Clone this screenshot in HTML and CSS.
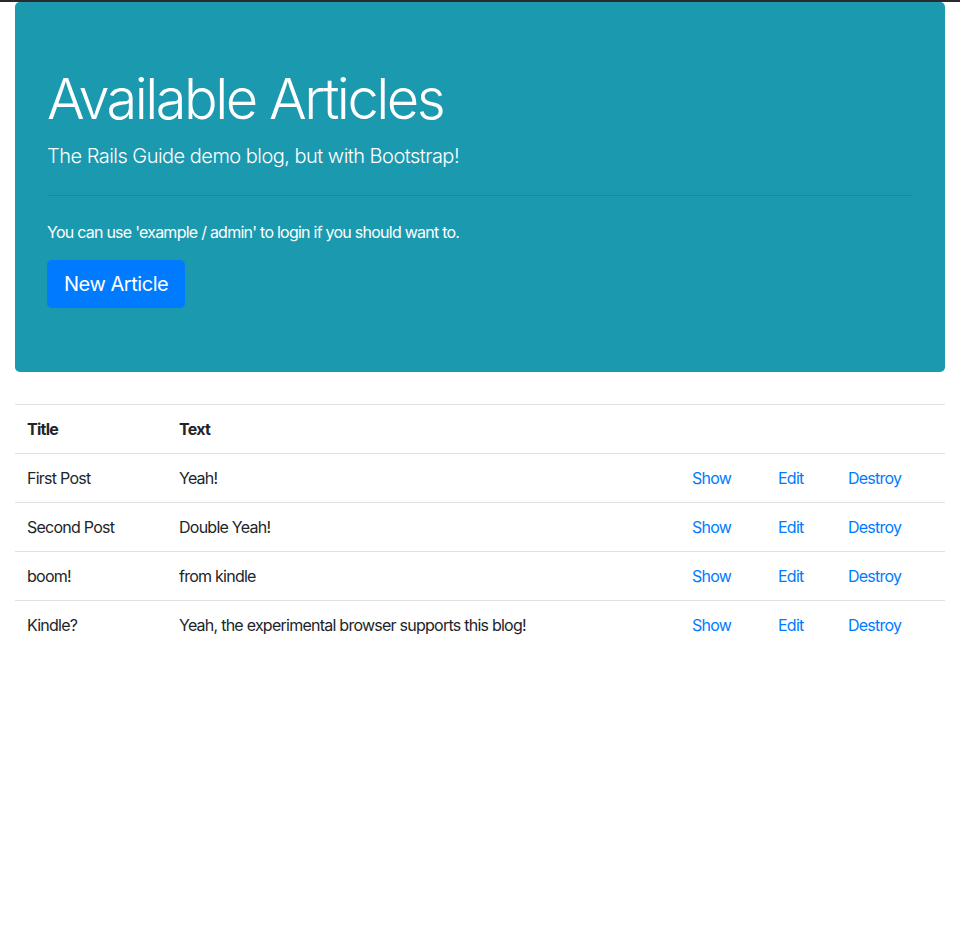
FILE: index.html
```html
<!DOCTYPE html>
<html lang="en">
<head>
<meta charset="utf-8">
<title>Available Articles</title>
<link rel="stylesheet" href="styles.css">
</head>
<body>
<div class="frame-top"></div>
<div class="container">
  <div class="jumbotron">
    <h1 class="display">Available Articles</h1>
    <p class="lead">The Rails Guide demo blog, but with Bootstrap!</p>
    <hr class="divider">
    <p class="note">You can use 'example / admin' to login if you should want to.</p>
    <a class="btn" href="#">New Article</a>
  </div>
  <table class="table">
    <thead>
      <tr><th class="c-title">Title</th><th class="c-text">Text</th><th class="c-show"></th><th class="c-edit"></th><th class="c-destroy"></th></tr>
    </thead>
    <tbody>
      <tr><td>First Post</td><td>Yeah!</td><td><a href="#">Show</a></td><td><a href="#">Edit</a></td><td><a href="#">Destroy</a></td></tr>
      <tr><td>Second Post</td><td>Double Yeah!</td><td><a href="#">Show</a></td><td><a href="#">Edit</a></td><td><a href="#">Destroy</a></td></tr>
      <tr><td>boom!</td><td>from kindle</td><td><a href="#">Show</a></td><td><a href="#">Edit</a></td><td><a href="#">Destroy</a></td></tr>
      <tr><td>Kindle?</td><td>Yeah, the experimental browser supports this blog!</td><td><a href="#">Show</a></td><td><a href="#">Edit</a></td><td><a href="#">Destroy</a></td></tr>
    </tbody>
  </table>
</div>
</body>
</html>
```
FILE: styles.css
```css
* { box-sizing: border-box; }
html, body { margin: 0; padding: 0; }
body {
  font-family: Inter, "Liberation Sans", sans-serif;
  font-size: 16px;
  line-height: 1.5;
  letter-spacing: -0.047em;
  color: #212529;
  background: #fff;
}
.frame-top { height: 2px; background: #2a2a2c; }
.container { padding: 0 15px; }
.jumbotron {
  background: #1b99af;
  color: #fff;
  padding: 64px 32px;
  border-radius: 4.8px;
  margin-bottom: 32px;
}
.display {
  font-size: 56px;
  font-weight: 300;
  line-height: 1.2;
  letter-spacing: -0.045em;
  margin: 0 0 8px;
}
.lead {
  font-size: 20px;
  font-weight: 300;
  letter-spacing: -0.026em;
  margin: 0 0 16px;
}
.divider {
  border: 0;
  border-top: 1px solid rgba(0,0,0,0.1);
  margin: 24px 0;
  height: 0;
}
.note { margin: 0 0 16px; }
.btn {
  display: inline-block;
  background: #007bff;
  color: #fff;
  text-decoration: none;
  font-size: 20px;
  line-height: 1.5;
  letter-spacing: -0.023em;
  padding: 8px 16px;
  border: 1px solid #007bff;
  border-radius: 4.8px;
}
.table {
  width: 100%;
  border-collapse: collapse;
}
.table th, .table td {
  padding: 12px;
  border-top: 1px solid #dee2e6;
  text-align: left;
  vertical-align: top;
}
.table th { font-weight: 700; }
.c-title { width: 152px; }
.c-show { width: 86px; }
.c-edit { width: 70px; }
.c-destroy { width: 109px; }
.table a { color: #007bff; text-decoration: none; }
```
